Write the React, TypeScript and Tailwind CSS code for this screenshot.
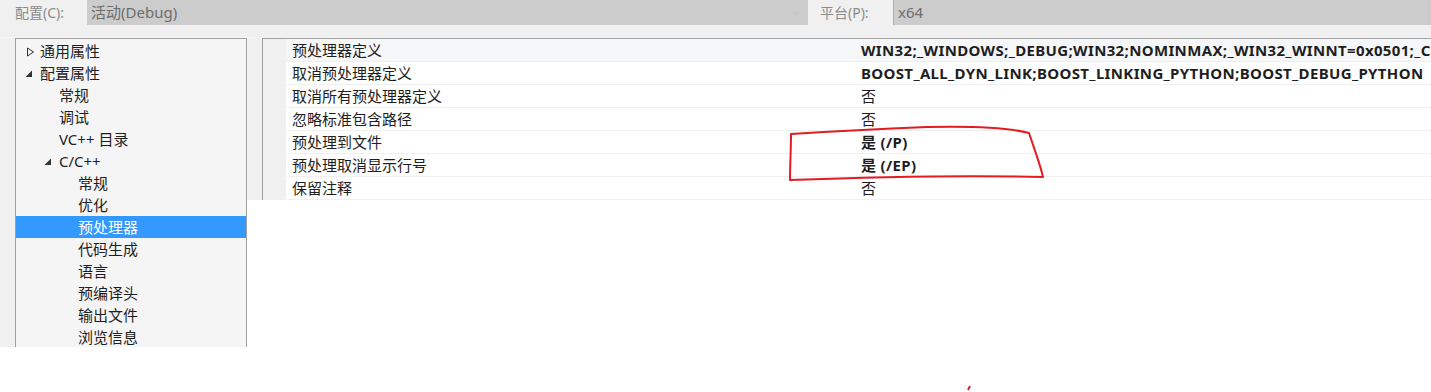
import { ChevronDown } from 'lucide-react';

const FONT = "font-['Segoe_UI','Noto_Sans','Noto_Sans_CJK_SC',sans-serif]";

type TreeRow = { label: string; level: number; arrow?: 'open' | 'closed'; selected?: boolean };

const TREE: TreeRow[] = [
  { label: '通用属性', level: 0, arrow: 'closed' },
  { label: '配置属性', level: 0, arrow: 'open' },
  { label: '常规', level: 1 },
  { label: '调试', level: 1 },
  { label: 'VC++ 目录', level: 1 },
  { label: 'C/C++', level: 1, arrow: 'open' },
  { label: '常规', level: 2 },
  { label: '优化', level: 2 },
  { label: '预处理器', level: 2, selected: true },
  { label: '代码生成', level: 2 },
  { label: '语言', level: 2 },
  { label: '预编译头', level: 2 },
  { label: '输出文件', level: 2 },
  { label: '浏览信息', level: 2 },
];

const PROPS = [
  { name: '预处理器定义', value: 'WIN32;_WINDOWS;_DEBUG;WIN32;NOMINMAX;_WIN32_WINNT=0x0501;_CRT_SECURE_NO_WARNINGS', bold: true },
  { name: '取消预处理器定义', value: 'BOOST_ALL_DYN_LINK;BOOST_LINKING_PYTHON;BOOST_DEBUG_PYTHON', bold: true },
  { name: '取消所有预处理器定义', value: '否' },
  { name: '忽略标准包含路径', value: '否' },
  { name: '预处理到文件', value: '是 (/P)', bold: true },
  { name: '预处理取消显示行号', value: '是 (/EP)', bold: true },
  { name: '保留注释', value: '否' },
];

const INDENT = ['pl-[24px]', 'pl-[43px]', 'pl-[62px]'];

function Arrow({ kind }: { kind: 'open' | 'closed' }) {
  if (kind === 'closed') {
    return (
      <svg width="9" height="10" viewBox="0 0 9 10" className="absolute left-[-14px] top-[6px]">
        <path d="M1.5 1 L7.5 5 L1.5 9 Z" fill="none" stroke="#333" strokeWidth="1" />
      </svg>
    );
  }
  return (
    <svg width="8" height="8" viewBox="0 0 8 8" className="absolute left-[-15px] top-[7px]">
      <path d="M7 0.5 L7 7 L0.5 7 Z" fill="#333" />
    </svg>
  );
}

export default function App() {
  return (
    <div className={`relative w-[1431px] h-[392px] bg-white overflow-hidden text-[15px] ${FONT}`}>
      {/* config bar */}
      <div className="flex h-[25px] bg-[#f0f0f0]">
        <div className="w-[87px] shrink-0 pl-[15px] leading-[25px] text-[14px] text-[#8b8b8b]">配置(C):</div>
        <div className="relative w-[721px] shrink-0 bg-[#cccccc] pl-[4px] leading-[25px] text-[#6d6d6d]">
          活动(Debug)
          <ChevronDown className="absolute right-[6px] top-[8px] w-[11px] h-[11px] text-[#b5b5b5]" strokeWidth={1.5} />
        </div>
        <div className="w-[85px] shrink-0 pl-[12px] leading-[25px] text-[14px] text-[#8b8b8b]">平台(P):</div>
        <div className="flex-1 bg-[#cccccc] border-l border-[#b0b0b0] pl-[4px] leading-[25px] text-[#6d6d6d]">x64</div>
      </div>
      <div className="h-[13px] bg-[#f0f0f0] border-b border-[#f5f5f5]" />

      <div className="flex items-start">
        <div className="w-[15px] h-[309px] shrink-0 bg-[#f0f0f0]" />
        {/* tree */}
        <div className="w-[232px] shrink-0 h-[309px] border border-[#a0a0a0] border-b-0 bg-[#f5f5f5] pt-[1px] overflow-hidden">
          {TREE.map((r, i) => (
            <div
              key={i}
              className={`h-[22px] leading-[22px] whitespace-nowrap ${INDENT[r.level]} ${r.selected ? 'bg-[#3399ff] text-white' : 'text-[#1e1e1e]'}`}
            >
              <span className="relative">
                {r.arrow && <Arrow kind={r.arrow} />}
                {r.label}
              </span>
            </div>
          ))}
        </div>
        <div className="w-[15px] shrink-0 h-[162px] bg-[#f0f0f0]" />
        {/* property grid */}
        <div className="flex-1 min-w-0 h-[162px] border-t border-l border-[#a0a0a0] bg-white flex">
          <div className="w-[23px] shrink-0 bg-[#f0f0f0]" />
          <div className="flex-1 min-w-0">
            {PROPS.map((p, i) => (
              <div key={i} className={`flex h-[23px] leading-[22px] border-b border-[#f0f0f0] ${i === 0 ? 'bg-[#f5f6f8]' : ''}`}>
                <div className="w-[575px] shrink-0 pl-[6px] text-[#1e1e1e] whitespace-nowrap">{p.name}</div>
                <div className={`flex-1 min-w-0 whitespace-nowrap overflow-hidden text-[#1e1e1e] ${p.bold ? 'font-bold tracking-[0.35px]' : ''}`}>
                  {p.value}
                </div>
              </div>
            ))}
          </div>
        </div>
      </div>

      {/* red annotation */}
      <svg className="absolute left-0 top-0 pointer-events-none" width="1431" height="392">
        <path
          d="M791 134 C840 131 880 129 927 127 C970 126 1010 128 1029 133 C1034 148 1040 164 1043 177 C960 175 870 177 790 180 C790 165 791 150 791 134 Z"
          fill="none"
          stroke="#e31b23"
          strokeWidth="2"
          strokeLinejoin="round"
        />
        <path d="M968 390 L970 386" stroke="#e31b23" strokeWidth="2" />
      </svg>
    </div>
  );
}
